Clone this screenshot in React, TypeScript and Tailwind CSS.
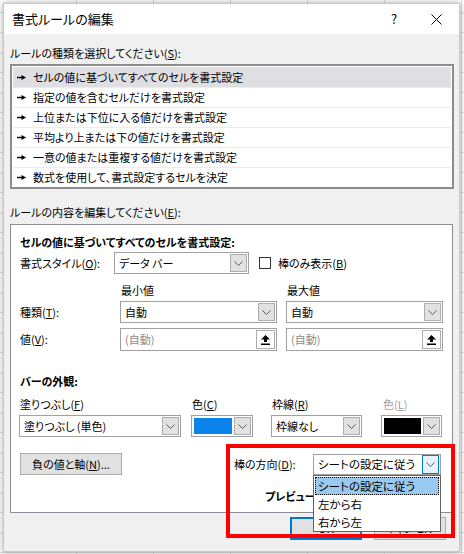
import React from "react";

function Chevron() {
  return (
    <svg width="9" height="5" viewBox="0 0 9 5">
      <path d="M0.5 0.5 L4.5 4.5 L8.5 0.5" stroke="#5a5a5a" fill="none" />
    </svg>
  );
}

function Arrow() {
  return (
    <svg width="9" height="5" viewBox="0 0 9 5" className="shrink-0">
      <rect x="0" y="1.8" width="5" height="1.4" fill="#000" />
      <path d="M4.5 0 L9 2.5 L4.5 5 Z" fill="#000" />
    </svg>
  );
}

function UpButton() {
  return (
    <div className="w-[19px] h-[19px] mr-[1px] bg-white border border-[#adadad] flex items-center justify-center">
      <svg width="9" height="10" viewBox="0 0 9 10">
        <path d="M4.5 0 L9 4.5 L6 4.5 L6 7 L3 7 L3 4.5 L0 4.5 Z" fill="#000" />
        <rect x="0" y="8.5" width="9" height="1.5" fill="#000" />
      </svg>
    </div>
  );
}

function DropBtn({ focus }: { focus?: boolean }) {
  return (
    <div
      className={
        focus
          ? "w-[17px] h-[19px] mr-[1px] bg-[#e5f1fb] border border-[#0078d7] flex items-center justify-center"
          : "w-[17px] h-[18px] mr-[1px] bg-[#e1e1e1] border border-[#adadad] flex items-center justify-center"
      }
    >
      <Chevron />
    </div>
  );
}

function Select({ className, text }: { className: string; text: string }) {
  return (
    <div className={"flex items-center h-[22px] border border-[#a0a0a0] bg-white " + className}>
      <div className="flex-1 pl-[4px] leading-[20px] whitespace-nowrap overflow-hidden">{text}</div>
      <DropBtn />
    </div>
  );
}

function ColorSelect({ className, color }: { className: string; color: string }) {
  return (
    <div className={"flex items-center h-[22px] border border-[#a0a0a0] bg-white " + className}>
      <div className="flex-1 h-[16px] mx-[2px]" style={{ background: color }} />
      <DropBtn />
    </div>
  );
}

function ValueInput() {
  return (
    <div className="flex items-center w-[157px] h-[23px] border border-[#a0a0a0] bg-white">
      <div className="flex-1 pl-[4px] text-[#8a8a8a] leading-[21px]">(自動)</div>
      <UpButton />
    </div>
  );
}

const rules = [
  "セルの値に基づいてすべてのセルを書式設定",
  "指定の値を含むセルだけを書式設定",
  "上位または下位に入る値だけを書式設定",
  "平均より上または下の値だけを書式設定",
  "一意の値または重複する値だけを書式設定",
  "数式を使用して、書式設定するセルを決定",
];

export default function App() {
  return (
    <div className="relative w-[464px] h-[554px] overflow-hidden bg-white bg-[linear-gradient(to_right,#dcdcdc_1px,transparent_1px),linear-gradient(to_bottom,#dcdcdc_1px,transparent_1px)] bg-[size:77px_20px] bg-[position:-1px_12px] pt-[3px] pl-[3px] text-[11px] text-black font-['Meiryo_UI','Noto_Sans_CJK_JP',sans-serif] [font-feature-settings:'palt']">
      <div className="w-[457px] h-[549px] bg-[#f0f0f0] border border-[#c8c8c8] shadow-[0_0_6px_rgba(0,0,0,0.35)] flex flex-col">
        {/* title bar */}
        <div className="h-[30px] bg-white flex items-center">
          <div className="flex-1 pl-[8px] text-[13px]">書式ルールの編集</div>
          <div className="w-[38px] h-[30px] flex items-center justify-center text-[13px]">?</div>
          <div className="w-[46px] h-[30px] flex items-center justify-center">
            <svg width="11" height="11" viewBox="0 0 11 11">
              <path d="M0.5 0.5 L10.5 10.5 M10.5 0.5 L0.5 10.5" stroke="#000" strokeWidth="1" />
            </svg>
          </div>
        </div>

        <div className="pl-[6px] flex flex-col">
          <div className="mt-[11px] h-[16px] leading-[16px]">
            ルールの種類を選択してください(<u>S</u>):
          </div>

          <div className="mt-[3px] w-[444px] h-[125px] border-2 border-[#8c8c8c] bg-white p-[1px]">
            {rules.map((r, i) => (
              <div
                key={r}
                className={
                  i === 0
                    ? "h-[20px] flex items-center gap-[7px] pl-[4px] bg-[#dedee3]"
                    : "h-[20px] flex items-center gap-[7px] pl-[4px] border-t border-[#ececec]"
                }
              >
                <Arrow />
                <span>{r}</span>
              </div>
            ))}
          </div>

          <div className="mt-[15px] h-[16px] leading-[16px]">
            ルールの内容を編集してください(<u>E</u>):
          </div>

          <div className="mt-[4px] w-[443px] h-[289px] border border-[#8c8c96] bg-white pl-[9px] pt-[9px] flex flex-col">
            <div className="h-[16px] leading-[16px] font-bold">セルの値に基づいてすべてのセルを書式設定:</div>

            <div className="mt-[2px] flex items-center h-[22px]">
              <div className="w-[94px]">
                書式スタイル(<u>O</u>):
              </div>
              <Select className="w-[135px]" text="データ バー" />
              <div className="ml-[10px] w-[12px] h-[12px] border border-[#333]" />
              <div className="ml-[7px]">
                棒のみ表示(<u>B</u>)
              </div>
            </div>

            <div className="mt-[8px] flex h-[16px] leading-[16px]">
              <div className="ml-[101px] w-[166px]">最小値</div>
              <div>最大値</div>
            </div>

            <div className="mt-[3px] flex items-center">
              <div className="w-[100px]">
                種類(<u>T</u>):
              </div>
              <Select className="w-[157px]" text="自動" />
              <Select className="ml-[9px] w-[157px]" text="自動" />
            </div>

            <div className="mt-[5px] flex items-center">
              <div className="w-[100px]">
                値(<u>V</u>):
              </div>
              <ValueInput />
              <div className="ml-[9px]">
                <ValueInput />
              </div>
            </div>

            <div className="mt-[22px] h-[16px] leading-[16px] font-bold">バーの外観:</div>

            <div className="mt-[7px] flex h-[16px] leading-[16px]">
              <div className="w-[172px]">
                塗りつぶし(<u>F</u>)
              </div>
              <div className="w-[80px]">
                色(<u>C</u>)
              </div>
              <div className="w-[111px]">
                枠線(<u>R</u>)
              </div>
              <div className="text-[#a0a0a0]">
                色(<u>L</u>)
              </div>
            </div>

            <div className="mt-[3px] -ml-[1px] flex items-center">
              <Select className="w-[162px]" text="塗りつぶし (単色)" />
              <ColorSelect className="ml-[10px] w-[62px]" color="#0a84ea" />
              <Select className="ml-[18px] w-[91px]" text="枠線なし" />
              <ColorSelect className="ml-[19px] w-[61px]" color="#000000" />
            </div>

            <div className="mt-[16px] flex items-center">
              <div className="w-[102px] h-[22px] bg-[#e1e1e1] border border-[#adadad] flex items-center justify-center">
                負の値と軸(<u>N</u>)...
              </div>
              <div className="ml-[112px] w-[79px]">
                棒の方向(<u>D</u>):
              </div>
              <div className="relative z-10 w-[128px] text-[11.5px]">
                <div className="flex items-center h-[21px] border border-[#a0a0a0] bg-white">
                  <div className="flex-1 pl-[4px] leading-[19px]">シートの設定に従う</div>
                  <DropBtn focus />
                </div>
                <div className="absolute top-full left-0 w-[128px] h-[57px] border border-[#646464] bg-white p-[1px]">
                  <div className="h-[18px] leading-[16px] pl-[2px] bg-[#99c9ef] border border-dotted border-black">
                    シートの設定に従う
                  </div>
                  <div className="h-[18px] leading-[18px] pl-[3px]">左から右</div>
                  <div className="h-[18px] leading-[18px] pl-[3px]">右から左</div>
                </div>
              </div>
            </div>

            <div className="mt-[13px] pl-[245px] h-[16px] leading-[16px] font-bold">プレビュー:</div>
          </div>

          <div className="mt-[4px] w-[443px] flex justify-end pr-[7px]">
            <div className="w-[72px] h-[23px] bg-[#e1e1e1] border-2 border-[#0078d7] flex items-center justify-center">
              OK
            </div>
            <div className="ml-[12px] w-[72px] h-[23px] bg-[#e1e1e1] border border-[#adadad] flex items-center justify-center">
              キャンセル
            </div>
          </div>
        </div>
      </div>

      <div className="absolute left-[226px] top-[444px] w-[229px] h-[94px] border-4 border-[#ff0000] z-20" />
    </div>
  );
}
